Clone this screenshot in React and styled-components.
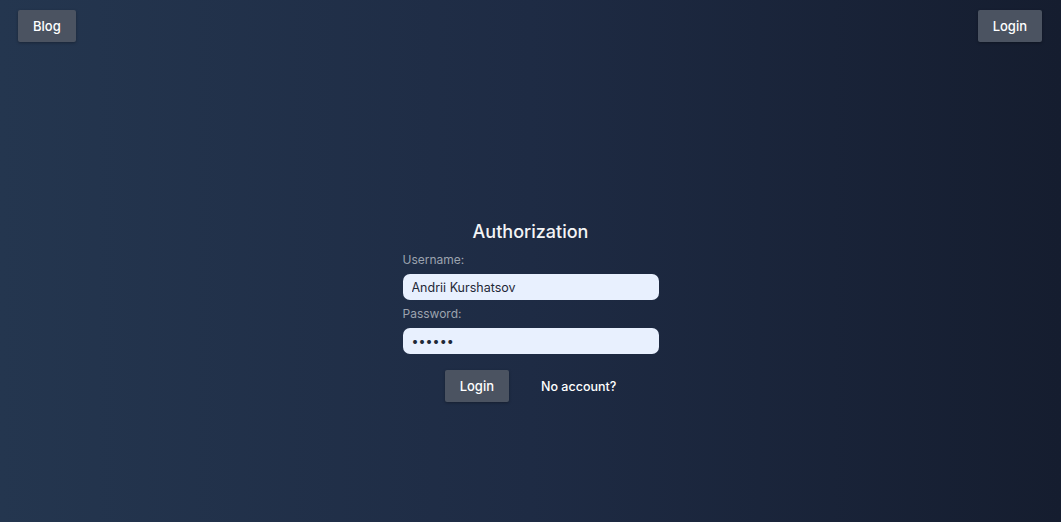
import React from 'react'
import styled, { createGlobalStyle } from 'styled-components'

const Global = createGlobalStyle`
  html, body { margin: 0; padding: 0; height: 100%; }
  body { font-family: Inter, "Open Sans", sans-serif; }
  #root { height: 100%; }
`

const Page = styled.div`
  height: 522px;
  background: linear-gradient(90deg, #24364f 0%, #1e2b44 50%, #151d2f 100%);
  display: flex;
  flex-direction: column;
  color: #fff;
`

const Header = styled.header`
  display: flex;
  justify-content: space-between;
  padding: 10px 19px 0 18px;
`

const Button = styled.button`
  height: 32px;
  padding: 0 15px;
  background: #4b5361;
  color: #fff;
  border: none;
  border-radius: 2px;
  font-family: inherit;
  font-size: 13px;
  font-weight: 500;
  box-shadow: 0 1px 3px rgba(0, 0, 0, 0.3);
  cursor: pointer;
`

const Main = styled.main`
  flex: 1;
  display: flex;
  justify-content: center;
  padding-top: 178px;
`

const Form = styled.form`
  width: 256px;
  display: flex;
  flex-direction: column;
`

const Title = styled.h2`
  margin: 0 0 8px;
  text-align: center;
  font-size: 18px;
  font-weight: 500;
  line-height: 24px;
  color: #f3f4f6;
`

const Label = styled.label`
  font-size: 12px;
  color: #9ca3af;
  line-height: 16px;
  margin-bottom: 6px;
`

const Input = styled.input`
  height: 26px;
  box-sizing: border-box;
  border: none;
  border-radius: 7px;
  background: #e8f0fe;
  padding: 0 9px;
  font-family: inherit;
  font-size: 12.5px;
  color: #1f2937;
  margin-bottom: ${p => p.$last ? 16 : 6}px;
  outline: none;
`

const Actions = styled.div`
  display: flex;
  align-items: center;
  justify-content: center;
  gap: 32px;
`

const Link = styled.a`
  font-size: 12.5px;
  font-weight: 500;
  color: #fff;
  text-decoration: none;
`

export default function App() {
  return (
    <>
      <Global />
      <Page>
        <Header>
          <Button>Blog</Button>
          <Button>Login</Button>
        </Header>
        <Main>
          <Form onSubmit={e => e.preventDefault()}>
            <Title>Authorization</Title>
            <Label>Username:</Label>
            <Input defaultValue="Andrii Kurshatsov" />
            <Label>Password:</Label>
            <Input $last type="password" defaultValue="secret" />
            <Actions>
              <Button type="submit">Login</Button>
              <Link href="#">No account?</Link>
            </Actions>
          </Form>
        </Main>
      </Page>
    </>
  )
}
